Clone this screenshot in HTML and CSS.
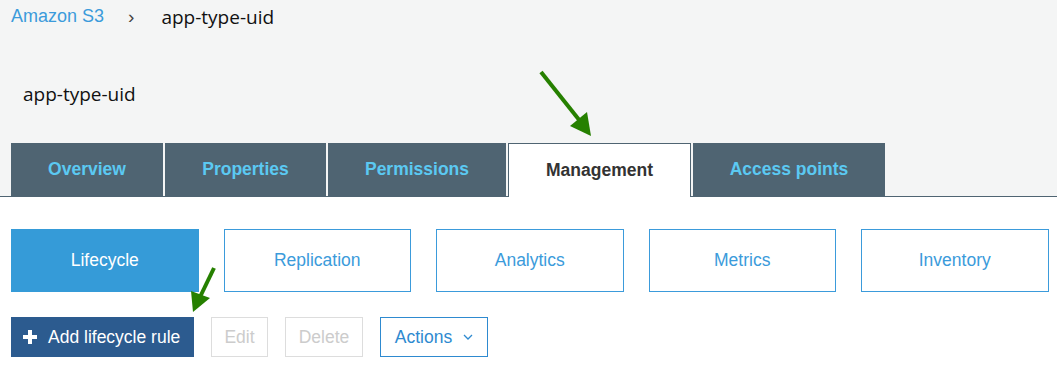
FILE: index.html
```html
<!DOCTYPE html>
<html>
<head>
<meta charset="utf-8">
<link rel="stylesheet" href="styles.css">
</head>
<body>
<div class="page">
  <header class="top">
    <nav class="crumbs">
      <a class="crumb-link">Amazon S3</a>
      <span class="crumb-sep">›</span>
      <span class="crumb-cur">app-type-uid</span>
    </nav>
    <h1 class="title">app-type-uid</h1>
    <div class="tabs">
      <div class="tab t1">Overview</div>
      <div class="tab t2">Properties</div>
      <div class="tab t3">Permissions</div>
      <div class="tab t4 active">Management</div>
      <div class="tab t5">Access points</div>
    </div>
  </header>
  <section class="content">
    <div class="subtabs">
      <div class="subtab active">Lifecycle</div>
      <div class="subtab">Replication</div>
      <div class="subtab">Analytics</div>
      <div class="subtab">Metrics</div>
      <div class="subtab">Inventory</div>
    </div>
    <div class="toolbar">
      <button class="btn primary"><span class="plus"></span>Add lifecycle rule</button>
      <button class="btn disabled b-edit">Edit</button>
      <button class="btn disabled b-del">Delete</button>
      <button class="btn outline b-act">Actions<svg class="chev" width="10" height="6" viewBox="0 0 10 6"><path d="M1 1 L5 5 L9 1" fill="none" stroke="#2e8ad0" stroke-width="1.3"/></svg></button>
    </div>
  </section>
  <svg class="arrows" width="1057" height="373" viewBox="0 0 1057 373">
    <line x1="541" y1="72" x2="580" y2="121" stroke="#268000" stroke-width="4"/>
    <polygon points="591,136 570,126 587,112" fill="#268000"/>
    <line x1="214" y1="268" x2="200" y2="297" stroke="#268000" stroke-width="4"/>
    <polygon points="193,312 191,291 210,298" fill="#268000"/>
  </svg>
</div>
</body>
</html>
```

FILE: styles.css
```css
html, body {
  margin: 0;
  padding: 0;
  background: #ffffff;
}
.page {
  position: relative;
  width: 1057px;
  height: 373px;
  overflow: hidden;
  font-family: "Liberation Sans", Arial, sans-serif;
}
.top {
  background: #f4f5f5;
  height: 196px;
  border-bottom: 1px solid #4f6472;
  display: flex;
  flex-direction: column;
}
.crumbs {
  display: flex;
  align-items: center;
  height: 33px;
  padding-left: 11px;
  font-size: 18px;
}
.crumb-link {
  color: #3b9bdb;
}
.crumb-sep {
  margin-left: 24px;
  color: #444;
  font-size: 19px;
}
.crumb-cur {
  margin-left: 27px;
  color: #111;
  font-family: "Open Sans", "Noto Sans", sans-serif;
  font-size: 19px;
}
.title {
  margin: 44px 0 0 23px;
  font-family: "Open Sans", "Noto Sans", sans-serif;
  font-weight: normal;
  font-size: 19px;
  line-height: 34px;
  color: #111;
}
.tabs {
  margin-top: auto;
  margin-left: 11px;
  display: flex;
  gap: 2px;
  height: 53px;
}
.tab {
  display: flex;
  align-items: center;
  justify-content: center;
  background: #4f6472;
  color: #5bc9f2;
  font-weight: bold;
  font-size: 17.5px;
  box-sizing: border-box;
}
.t1 { width: 152px; }
.t2 { width: 161px; }
.t3 { width: 178px; }
.t4 { width: 183px; }
.t5 { width: 192px; }
.tab.active {
  background: #ffffff;
  color: #333333;
  border: 1px solid #4f6472;
  border-bottom: none;
  height: 54px;
  margin-bottom: -1px;
  padding-bottom: 1px;
}
.content {
  padding: 32px 0 0 11px;
}
.subtabs {
  display: flex;
  gap: 25px;
}
.subtab {
  width: 187.5px;
  height: 63px;
  box-sizing: border-box;
  border: 1px solid #3b9bdb;
  color: #3b9bdb;
  font-size: 17.5px;
  display: flex;
  align-items: center;
  justify-content: center;
}
.subtab.active {
  background: #359bd8;
  border-color: #359bd8;
  color: #ffffff;
}
.toolbar {
  display: flex;
  gap: 17px;
  margin-top: 25px;
}
.btn {
  height: 40px;
  box-sizing: border-box;
  font-family: "Liberation Sans", Arial, sans-serif;
  font-size: 17.5px;
  display: flex;
  align-items: center;
  justify-content: center;
  background: #ffffff;
  padding: 0;
}
.primary {
  width: 183px;
  background: #2c5b8f;
  border: none;
  color: #ffffff;
  justify-content: flex-start;
  padding-left: 12px;
}
.plus {
  position: relative;
  width: 14px;
  height: 14px;
  margin-right: 11px;
}
.plus::before, .plus::after {
  content: "";
  position: absolute;
  background: #ffffff;
}
.plus::before {
  left: 5px;
  top: 0;
  width: 4px;
  height: 14px;
}
.plus::after {
  left: 0;
  top: 5px;
  width: 14px;
  height: 4px;
}
.disabled {
  border: 1px solid #dddddd;
  color: #cccccc;
}
.b-edit { width: 57px; }
.b-del { width: 78px; }
.outline {
  border: 1px solid #2e8ad0;
  color: #2e8ad0;
}
.b-act {
  width: 108px;
}
.chev {
  margin-left: 11px;
}
.arrows {
  position: absolute;
  left: 0;
  top: 0;
  pointer-events: none;
}
```
